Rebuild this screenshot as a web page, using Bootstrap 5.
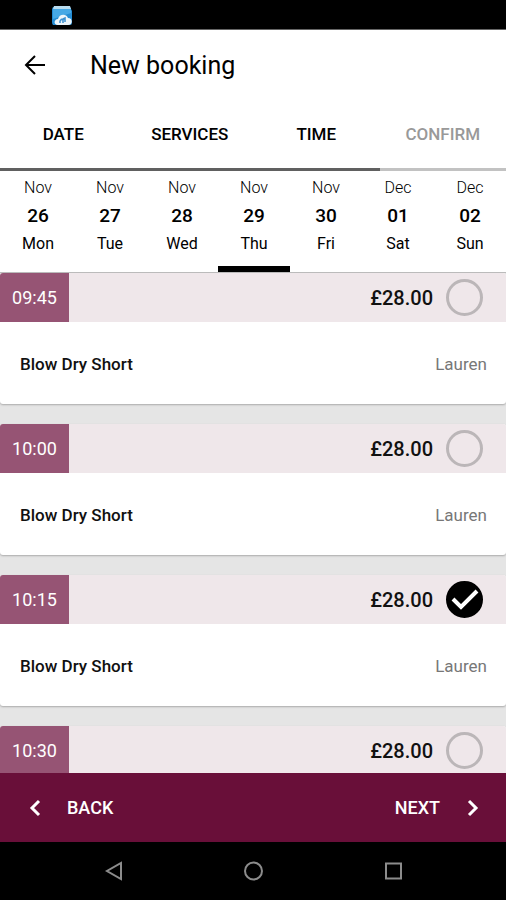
<!DOCTYPE html>
<html lang="en">
<head>
<meta charset="utf-8">
<meta name="viewport" content="width=device-width, initial-scale=1">
<title>New booking</title>
<link href="https://cdn.jsdelivr.net/npm/bootstrap@5.3.0/dist/css/bootstrap.min.css" rel="stylesheet">
<style>
  body { font-family: Roboto, "Liberation Sans", sans-serif; color: #000; background: #e5e5e5; }
  button { color: inherit; }
  svg { display: block; }
  .status-bar { height: 30px; padding-left: 51px; background: #000; border-bottom: 1px solid #666; }
  .screen { min-height: 0; }
  .app-header { height: 71px; padding-left: 23px; gap: 43px; }
  .app-title { font-size: 25px; line-height: 32px; font-weight: 400; }
  .step { height: 70px; padding: 0; border: 0; border-bottom: 3px solid #606060; background: none; font-size: 17px; font-weight: 500; }
  .step-idle { color: #999; border-color: #c2c2c2; }
  .days { padding-left: 2px; border-bottom: 1px solid #bbb; }
  .day { height: 101px; padding: 3px 0 0; border: 0; border-bottom: 6px solid transparent; background: none; font-size: 16px; line-height: 28px; }
  .day-on { border-color: #000; }
  .day-month { font-weight: 300; }
  .day-num { font-size: 19px; font-weight: 500; }
  .slots { min-height: 0; gap: 20px; }
  .slot { flex: none; background: #fff; border-radius: 3px; box-shadow: 0 1px 2px #aaa; }
  .slot-head { height: 49px; padding-right: 23px; background: #efe7ea; }
  .slot-time { width: 69px; background: #965474; color: #fff; font-size: 18px; }
  .slot-price { font-size: 20px; line-height: 24px; padding-top: 1px; font-weight: 500; margin-right: 13px; color: #111; }
  .slot-body { height: 82px; padding: 3px 19px 0 20px; font-size: 17px; }
  .slot-name { font-weight: 500; color: #111; }
  .slot-staff { color: #777; }
  .pick { appearance: none; width: 37px; height: 37px; margin: 0; border: 3px solid #bbb6b8; border-radius: 50%; }
  .pick-box { display: grid; }
  .pick-box > * { grid-area: 1 / 1; }
  .pick-box svg { visibility: hidden; pointer-events: none; }
  .pick:checked { background: #000; border-color: #000; }
  .pick:checked + svg { visibility: visible; }
  .actions { height: 69px; padding: 0 20px 0 21px; background: #690f39; color: #fff; z-index: 1; }
  .actions button { border: 0; background: none; padding: 0; gap: 18px; font-size: 18px; font-weight: 500; }
  .system-bar { height: 58px; padding: 0 43px; background: #000; }
  .system-bar button { border: 0; background: none; padding: 0; }
</style>
</head>
<body>
<div class="vh-100 d-flex flex-column overflow-hidden">
  <div class="status-bar flex-shrink-0 d-flex align-items-end">
    <svg width="22" height="24" viewBox="0 0 22 24" aria-hidden="true">
      <path d="M2 2h17l2 4v12q0 2-2 2H2q-1-1-1-3V4z" fill="#258cd3"/>
      <path d="M3 1h16l1 3H2z" fill="#b9dcef"/>
      <path d="M2 4h18v4L2 14z" fill="#46a8e5"/>
      <path d="M7 20c-5 0-4-6 0-6 1-5 8-6 10-1 5 0 5 7 0 7z" fill="#edf5fa"/>
      <path d="M9 18v-2q1-2 3-2m0 0v4m0-4 2-1v4" fill="none" stroke="#3a8fd0" stroke-width="1.5"/>
    </svg>
  </div>

  <main class="screen flex-grow-1 d-flex flex-column">
    <header class="bg-white flex-shrink-0">
      <div class="app-header d-flex align-items-center">
        <button type="button" class="border-0 bg-transparent p-0" aria-label="Back">
          <svg width="24" height="24" viewBox="0 0 24 24" fill="none" stroke="#000" stroke-width="2"><path d="M22 11H4M12 2l-9 9 9 9"/></svg>
        </button>
        <h1 class="app-title m-0">New booking</h1>
      </div>
      <nav class="row g-0 row-cols-4" aria-label="Booking steps">
        <button type="button" class="step col">DATE</button>
        <button type="button" class="step col">SERVICES</button>
        <button type="button" class="step col" aria-current="step">TIME</button>
        <button type="button" class="step step-idle col">CONFIRM</button>
      </nav>
      <div class="days d-flex">
        <button type="button" class="day col d-flex flex-column align-items-center"><span class="day-month">Nov</span><span class="day-num">26</span><span>Mon</span></button>
        <button type="button" class="day col d-flex flex-column align-items-center"><span class="day-month">Nov</span><span class="day-num">27</span><span>Tue</span></button>
        <button type="button" class="day col d-flex flex-column align-items-center"><span class="day-month">Nov</span><span class="day-num">28</span><span>Wed</span></button>
        <button type="button" class="day day-on col d-flex flex-column align-items-center" aria-pressed="true"><span class="day-month">Nov</span><span class="day-num">29</span><span>Thu</span></button>
        <button type="button" class="day col d-flex flex-column align-items-center"><span class="day-month">Nov</span><span class="day-num">30</span><span>Fri</span></button>
        <button type="button" class="day col d-flex flex-column align-items-center"><span class="day-month">Dec</span><span class="day-num">01</span><span>Sat</span></button>
        <button type="button" class="day col d-flex flex-column align-items-center"><span class="day-month">Dec</span><span class="day-num">02</span><span>Sun</span></button>
      </div>
    </header>

    <div class="slots flex-grow-1 d-flex flex-column overflow-hidden">
      <section class="slot overflow-hidden">
        <div class="slot-head d-flex align-items-center">
          <label for="t0945" class="slot-time h-100 d-flex align-items-center justify-content-center me-auto">09:45</label>
          <span class="slot-price">£28.00</span>
          <span class="pick-box"><input class="pick" type="radio" name="slot" id="t0945"><svg width="37" height="37" viewBox="0 0 37 37" fill="none" stroke="#fff" stroke-width="4"><path d="M7 18l8 8L31 10"/></svg></span>
        </div>
        <div class="slot-body d-flex align-items-center justify-content-between"><span class="slot-name">Blow Dry Short</span><span class="slot-staff">Lauren</span></div>
      </section>
      <section class="slot overflow-hidden">
        <div class="slot-head d-flex align-items-center">
          <label for="t1000" class="slot-time h-100 d-flex align-items-center justify-content-center me-auto">10:00</label>
          <span class="slot-price">£28.00</span>
          <span class="pick-box"><input class="pick" type="radio" name="slot" id="t1000"><svg width="37" height="37" viewBox="0 0 37 37" fill="none" stroke="#fff" stroke-width="4"><path d="M7 18l8 8L31 10"/></svg></span>
        </div>
        <div class="slot-body d-flex align-items-center justify-content-between"><span class="slot-name">Blow Dry Short</span><span class="slot-staff">Lauren</span></div>
      </section>
      <section class="slot overflow-hidden">
        <div class="slot-head d-flex align-items-center">
          <label for="t1015" class="slot-time h-100 d-flex align-items-center justify-content-center me-auto">10:15</label>
          <span class="slot-price">£28.00</span>
          <span class="pick-box"><input class="pick" type="radio" name="slot" id="t1015" checked><svg width="37" height="37" viewBox="0 0 37 37" fill="none" stroke="#fff" stroke-width="4"><path d="M7 18l8 8L31 10"/></svg></span>
        </div>
        <div class="slot-body d-flex align-items-center justify-content-between"><span class="slot-name">Blow Dry Short</span><span class="slot-staff">Lauren</span></div>
      </section>
      <section class="slot overflow-hidden">
        <div class="slot-head d-flex align-items-center">
          <label for="t1030" class="slot-time h-100 d-flex align-items-center justify-content-center me-auto">10:30</label>
          <span class="slot-price">£28.00</span>
          <span class="pick-box"><input class="pick" type="radio" name="slot" id="t1030"><svg width="37" height="37" viewBox="0 0 37 37" fill="none" stroke="#fff" stroke-width="4"><path d="M7 18l8 8L31 10"/></svg></span>
        </div>
      </section>
    </div>
  </main>

  <footer class="flex-shrink-0">
    <div class="actions d-flex align-items-center justify-content-between">
      <button type="button" class="d-flex align-items-center">
        <svg width="28" height="28" viewBox="0 0 28 28" fill="none" stroke="#fff" stroke-width="3"><path d="M18 7l-7 7 7 7"/></svg>BACK
      </button>
      <button type="button" class="d-flex align-items-center">NEXT
        <svg width="28" height="28" viewBox="0 0 28 28" fill="none" stroke="#fff" stroke-width="3"><path d="M11 7l7 7-7 7"/></svg>
      </button>
    </div>
    <div class="system-bar row g-0 row-cols-3 align-items-center">
      <button type="button" class="col d-flex justify-content-center" aria-label="System back"><svg width="20" height="20" viewBox="0 0 20 20" fill="none" stroke="#8c8c8c" stroke-width="2"><path d="M18 2v16L4 10z"/></svg></button>
      <button type="button" class="col d-flex justify-content-center" aria-label="Home"><svg width="20" height="20" viewBox="0 0 20 20" fill="none" stroke="#8c8c8c" stroke-width="2"><circle cx="10.500" cy="10" r="8.500"/></svg></button>
      <button type="button" class="col d-flex justify-content-center" aria-label="Recent apps"><svg width="20" height="20" viewBox="0 0 20 20" fill="none" stroke="#8c8c8c" stroke-width="2"><path d="M3 2.500h15v15H3z"/></svg></button>
    </div>
  </footer>
</div>
</body>
</html>
